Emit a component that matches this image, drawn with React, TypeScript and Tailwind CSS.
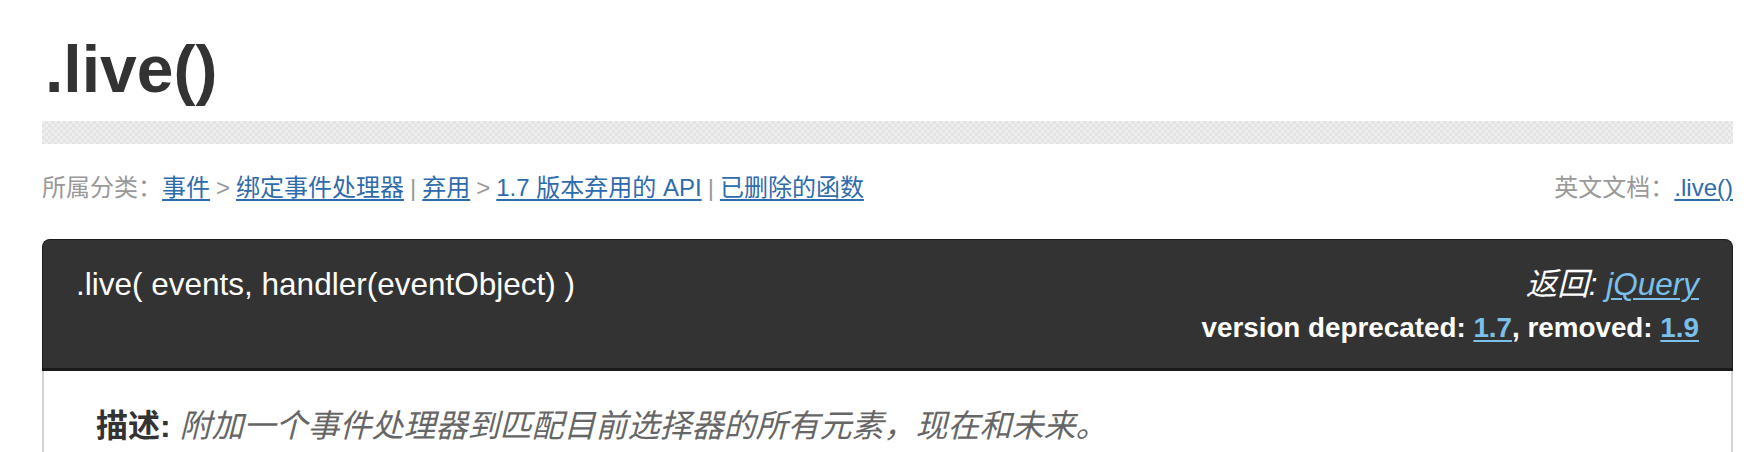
const font = "font-['Liberation_Sans','Noto_Sans_CJK_SC',sans-serif]";

function Sep({ ch }: { ch: string }) {
  return <span className="text-[#999] mx-[6px]">{ch}</span>;
}

function CatLink({ children }: { children: React.ReactNode }) {
  return (
    <a href="#" className="text-[#2e6bad] underline underline-offset-[3px] decoration-[2px]">
      {children}
    </a>
  );
}

export default function App() {
  return (
    <div className={`${font} bg-white min-h-[452px] text-[#333]`}>
      <div className="ml-[42px] w-[1691px] pt-[36px]">
        <h1 className="text-[66px] font-bold leading-none pl-[3px]">.live()</h1>

        <div className="mt-[19px] h-[23px] bg-[#e9e9e9] bg-[repeating-conic-gradient(#e3e3e3_0_25%,#eeeeee_0_50%)] bg-[length:6px_6px]" />

        <div className="mt-[28px] flex items-center justify-between text-[24px] leading-[32px]">
          <div className="flex items-center">
            <span className="text-[#999]">所属分类：</span>
            <CatLink>事件</CatLink>
            <Sep ch=">" />
            <CatLink>绑定事件处理器</CatLink>
            <Sep ch="|" />
            <CatLink>弃用</CatLink>
            <Sep ch=">" />
            <CatLink>1.7 版本弃用的 API</CatLink>
            <Sep ch="|" />
            <CatLink>已删除的函数</CatLink>
          </div>
          <div className="flex items-center">
            <span className="text-[#999]">英文文档：</span>
            <CatLink>.live()</CatLink>
          </div>
        </div>

        <div className="mt-[35px]">
          <div className="bg-[#333] rounded-t-[8px] border border-[#1c1c1c] border-b-[3px] border-b-[#1a1a1a] flex justify-between pl-[33px] pr-[33px] pt-[24px] h-[132px]">
            <div className="text-white text-[31.5px] leading-[40px]">
              .live( events, handler(eventObject) )
            </div>
            <div className="flex flex-col items-end">
              <div className="text-white text-[31.5px] leading-[40px] italic">
                返回:{" "}
                <a href="#" className="text-[#7ac0ea] underline underline-offset-[3px] decoration-[2px]">
                  jQuery
                </a>
              </div>
              <div className="text-white text-[27.8px] leading-[48px] font-bold">
                version deprecated:{" "}
                <a href="#" className="text-[#7ac0ea] underline underline-offset-[3px] decoration-[2px]">
                  1.7
                </a>
                , removed:{" "}
                <a href="#" className="text-[#7ac0ea] underline underline-offset-[3px] decoration-[2px]">
                  1.9
                </a>
              </div>
            </div>
          </div>
          <div className="border-x-2 border-[#d4d4d4] h-[90px] pl-[52px] pt-[33px]">
            <p className="text-[32px] leading-[44px]">
              <span className="font-bold text-[#333]">描述:</span>{" "}
              <span className="italic text-[#666]">附加一个事件处理器到匹配目前选择器的所有元素，现在和未来。</span>
            </p>
          </div>
        </div>
      </div>
    </div>
  );
}
